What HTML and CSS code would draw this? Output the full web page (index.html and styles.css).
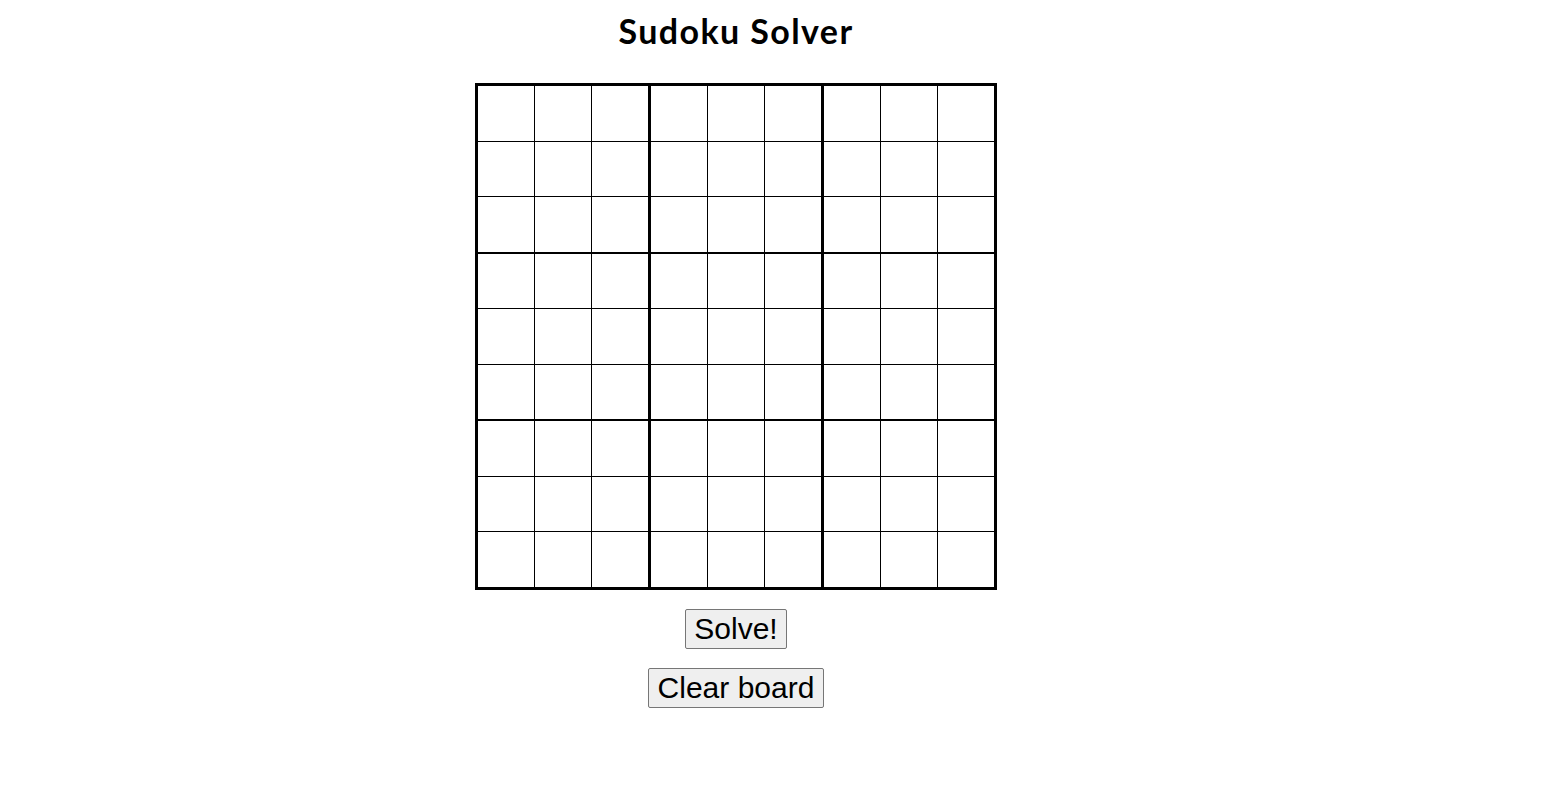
FILE: index.html
```html
<!DOCTYPE html>
<html lang="en">
<head>
<meta charset="utf-8">
<title>Sudoku Solver</title>
<link rel="stylesheet" href="styles.css">
</head>
<body>
<main class="app">
  <h1 class="title">Sudoku Solver</h1>
  <div class="board">
    <div class="cell"></div><div class="cell"></div><div class="cell"></div><div class="cell"></div><div class="cell"></div><div class="cell"></div><div class="cell"></div><div class="cell"></div><div class="cell"></div>
    <div class="cell"></div><div class="cell"></div><div class="cell"></div><div class="cell"></div><div class="cell"></div><div class="cell"></div><div class="cell"></div><div class="cell"></div><div class="cell"></div>
    <div class="cell"></div><div class="cell"></div><div class="cell"></div><div class="cell"></div><div class="cell"></div><div class="cell"></div><div class="cell"></div><div class="cell"></div><div class="cell"></div>
    <div class="cell"></div><div class="cell"></div><div class="cell"></div><div class="cell"></div><div class="cell"></div><div class="cell"></div><div class="cell"></div><div class="cell"></div><div class="cell"></div>
    <div class="cell"></div><div class="cell"></div><div class="cell"></div><div class="cell"></div><div class="cell"></div><div class="cell"></div><div class="cell"></div><div class="cell"></div><div class="cell"></div>
    <div class="cell"></div><div class="cell"></div><div class="cell"></div><div class="cell"></div><div class="cell"></div><div class="cell"></div><div class="cell"></div><div class="cell"></div><div class="cell"></div>
    <div class="cell"></div><div class="cell"></div><div class="cell"></div><div class="cell"></div><div class="cell"></div><div class="cell"></div><div class="cell"></div><div class="cell"></div><div class="cell"></div>
    <div class="cell"></div><div class="cell"></div><div class="cell"></div><div class="cell"></div><div class="cell"></div><div class="cell"></div><div class="cell"></div><div class="cell"></div><div class="cell"></div>
    <div class="cell"></div><div class="cell"></div><div class="cell"></div><div class="cell"></div><div class="cell"></div><div class="cell"></div><div class="cell"></div><div class="cell"></div><div class="cell"></div>
  </div>
  <button class="btn btn-solve" type="button">Solve!</button>
  <button class="btn btn-clear" type="button">Clear board</button>
</main>
</body>
</html>
```
FILE: styles.css
```css
html, body {
  margin: 0;
  padding: 0;
  background: #ffffff;
}

.app {
  width: 1472px;
  display: flex;
  flex-direction: column;
  align-items: center;
  font-family: "Liberation Sans", Arial, sans-serif;
  color: #000;
}

.title {
  margin: 11px 0 32px;
  font-family: Lato, "Open Sans", sans-serif;
  font-weight: 700;
  font-size: 34px;
  letter-spacing: 1.4px;
  line-height: 40px;
  color: #000;
}

.board {
  display: grid;
  grid-template-columns: repeat(9, max-content);
  border: 3px solid #000;
  background: #fff;
}

.cell {
  width: 56px;
  height: 54.56px;
  border-right: 1px solid #000;
  border-bottom: 1px solid #000;
}

.cell:nth-child(9n+3),
.cell:nth-child(9n+6) {
  border-right-width: 3px;
}

.cell:nth-child(9n) {
  border-right: none;
}

.cell:nth-child(n+19):nth-child(-n+27),
.cell:nth-child(n+46):nth-child(-n+54) {
  border-bottom-width: 2px;
}

.cell:nth-child(n+73) {
  border-bottom: none;
}

.btn {
  font-family: "Liberation Sans", Arial, sans-serif;
  font-size: 30px;
  line-height: 34px;
  padding: 2px 8px;
  color: #000;
  background: #efefef;
  border: 1px solid #767676;
  border-radius: 2px;
  margin: 19px 0 0;
}

.btn-clear {
  padding-left: 9px;
  padding-right: 9px;
}
```
